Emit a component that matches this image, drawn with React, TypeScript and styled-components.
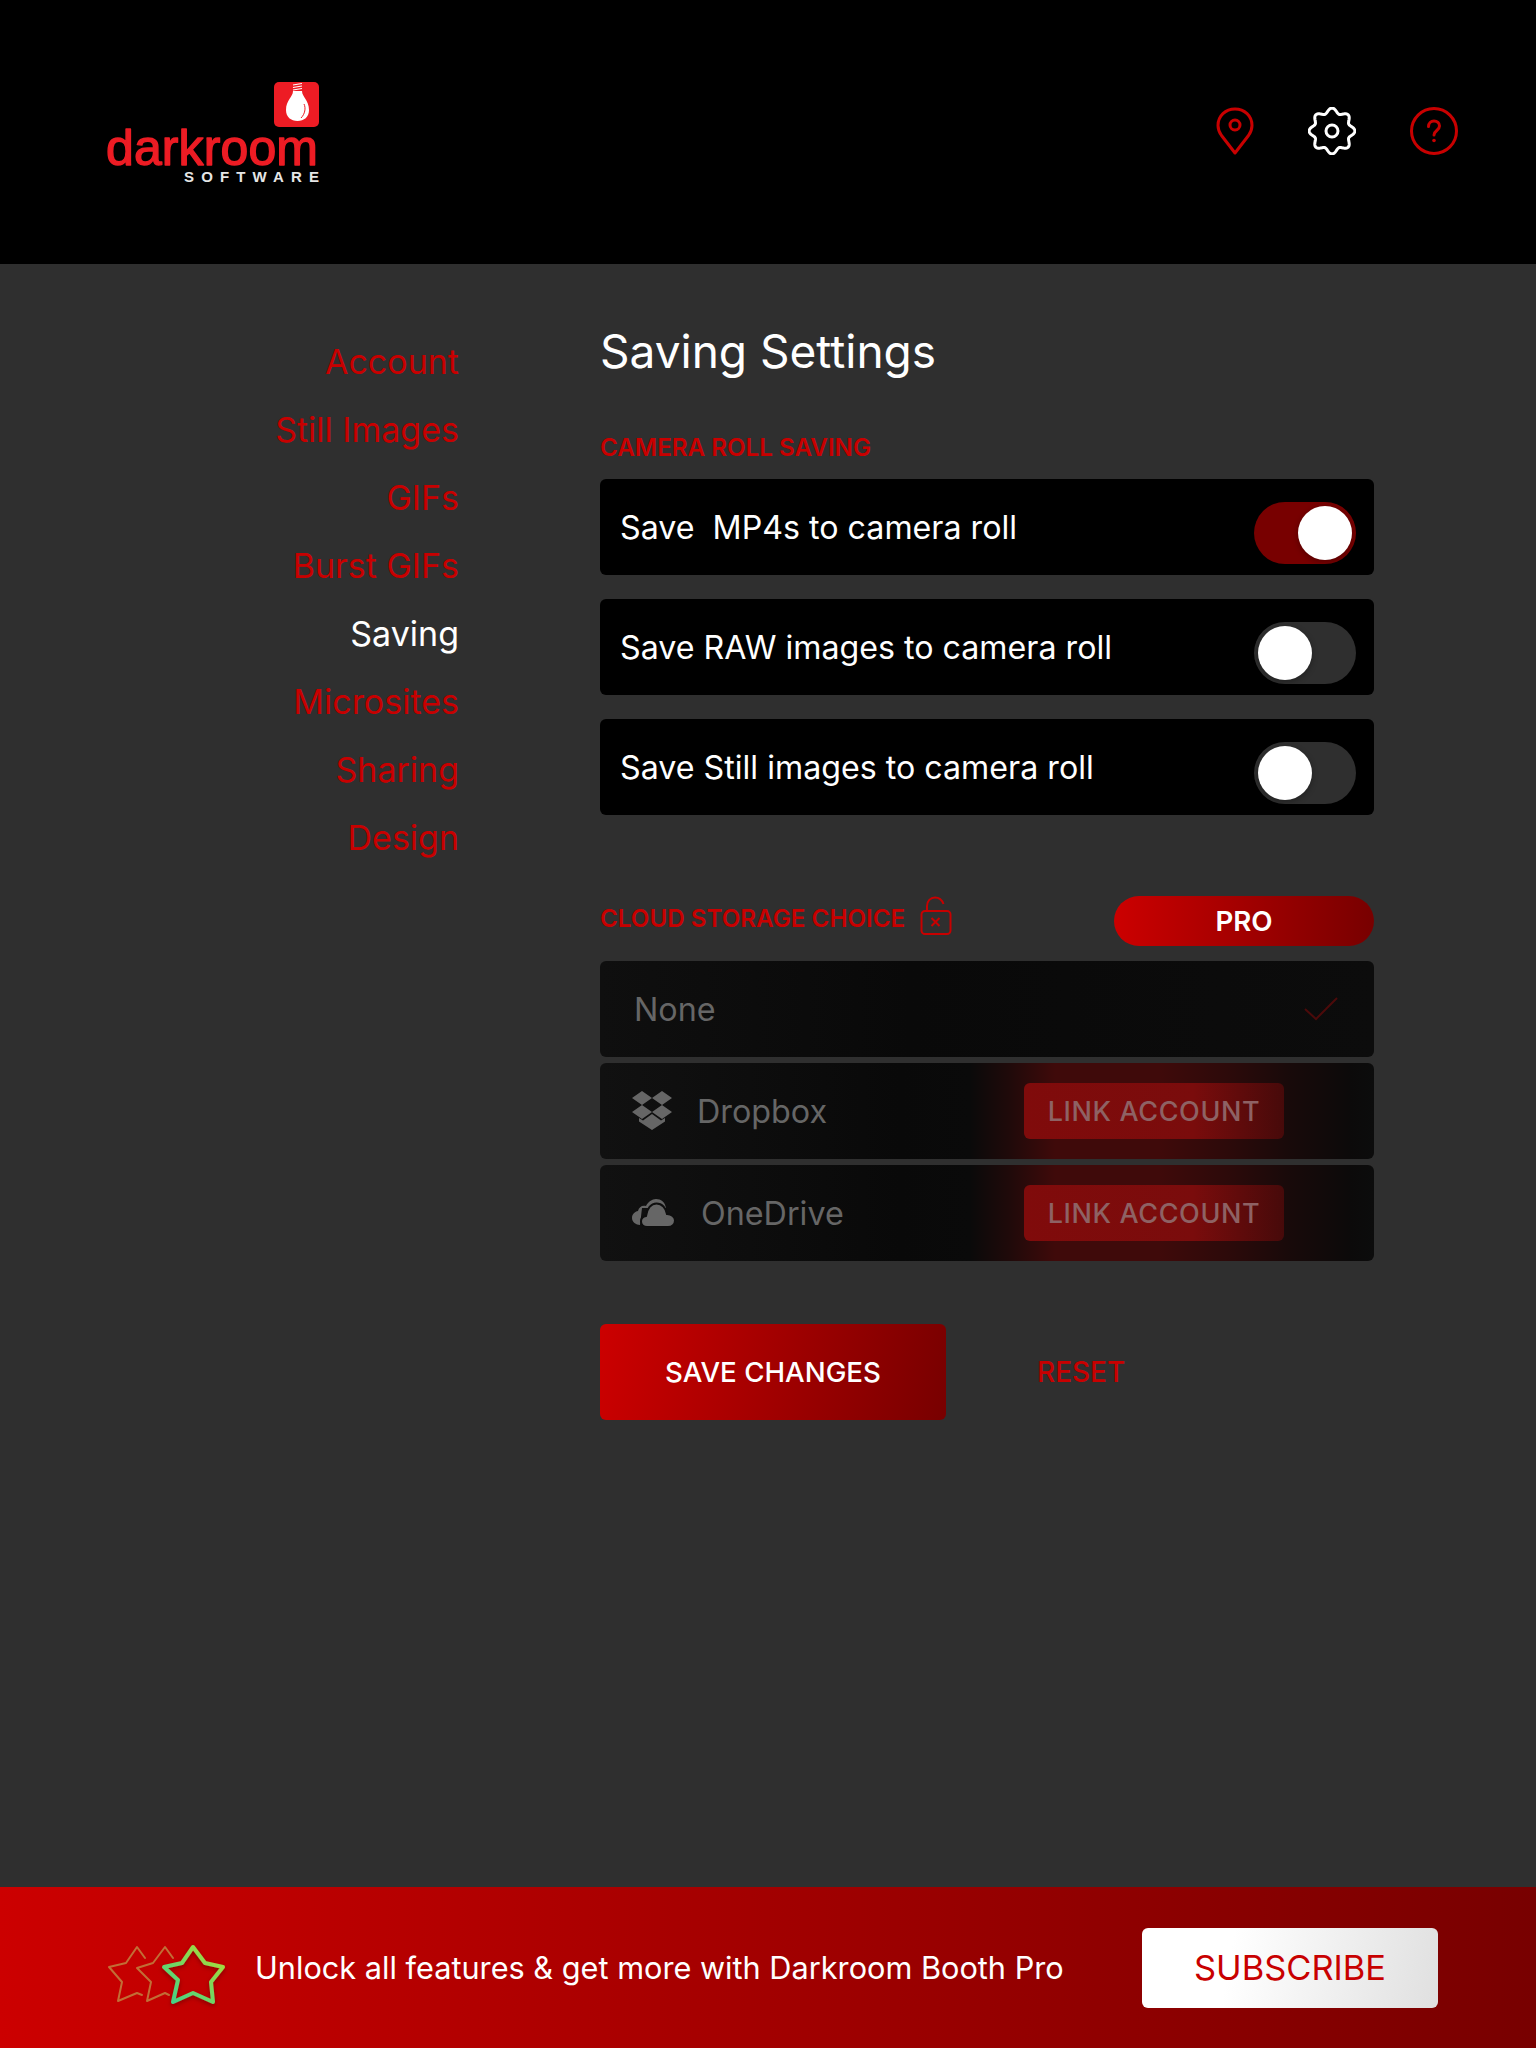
import React from "react";
import styled, { createGlobalStyle } from "styled-components";

const GlobalStyle = createGlobalStyle`
    html, body {
        margin: 0;
        padding: 0;
        background: #2f2f2f;
        font-family: Inter, "Noto Sans", sans-serif;
    }
    * {
        box-sizing: border-box;
    }
`

const Page = styled.div`
    width: 1536px;
    height: 2048px;
    display: flex;
    flex-direction: column;
    background: #2f2f2f;
    overflow: hidden;
`

const Header = styled.header`
    height: 264px;
    flex: none;
    background: #000;
    display: flex;
    align-items: flex-start;
    justify-content: space-between;
    padding: 82px 78px 0 105px;
`

const Logo = styled.svg`
    display: block;
    width: 215px;
    height: 102px;
`

const HeaderIcons = styled.nav`
    display: flex;
    align-items: flex-start;
    gap: 54px;
    padding-top: 25px;
`

const Main = styled.main`
    flex: 1;
    display: flex;
    align-items: flex-start;
`

const Sidebar = styled.ul`
    list-style: none;
    margin: 0;
    padding: 64px 0 0;
    width: 459px;
    flex: none;
    text-align: right;
`

const SideItem = styled.li<{ $active?: boolean }>`
    height: 68px;
    line-height: 68px;
    font-size: 34px;
    color: ${(p) => (p.$active ? "#fff" : "#c80000")};
`

const Content = styled.section`
    margin-left: 141px;
    width: 774px;
    padding-top: 59px;
`

const Title = styled.h1`
    margin: 0;
    font-size: 46px;
    line-height: 56px;
    font-weight: 400;
    color: #fff;
`

const SectionLabel = styled.h2`
    margin: 0;
    font-size: 24.2px;
    line-height: 28px;
    font-weight: 600;
    color: #c80000;
`

const FirstLabel = styled(SectionLabel)`
    margin-top: 55px;
    margin-bottom: 17px;
`

const CloudLabel = styled(SectionLabel)`
    margin-bottom: 5px;
`

const SwitchRows = styled.div`
    display: flex;
    flex-direction: column;
    gap: 24px;
`

const SwitchRow = styled.div`
    height: 96px;
    border-radius: 6px;
    background: #000;
    display: flex;
    align-items: center;
    justify-content: space-between;
    padding: 0 18px 0 20px;
    font-size: 32.2px;
    color: #fff;
    white-space: pre;
`

const Toggle = styled.span<{ $on?: boolean }>`
    width: 102px;
    height: 62px;
    margin-top: 12px;
    border-radius: 31px;
    padding: 4px;
    display: flex;
    justify-content: ${(p) => (p.$on ? "flex-end" : "flex-start")};
    background: ${(p) => (p.$on ? "#780000" : "#2f2f2f")};
`

const Knob = styled.span`
    width: 54px;
    height: 54px;
    border-radius: 50%;
    background: #fff;
    box-shadow: 0 2px 6px rgba(0, 0, 0, 0.3);
`

const CloudHeader = styled.div`
    margin-top: 81px;
    height: 50px;
    display: flex;
    align-items: center;
`

const LockIcon = styled.svg`
    display: block;
    margin-left: 15px;
    margin-bottom: 10px;
`

const ProPill = styled.span`
    margin-left: auto;
    width: 260px;
    height: 50px;
    border-radius: 25px;
    background: linear-gradient(90deg, #cc0000, #780000);
    color: #fff;
    font-size: 27.7px;
    font-weight: 600;
    display: flex;
    align-items: center;
    justify-content: center;
`

const CloudRows = styled.div`
    margin-top: 15px;
    display: flex;
    flex-direction: column;
    gap: 6px;
`

const CloudRow = styled.div<{ $link?: boolean }>`
    height: 96px;
    border-radius: 6px;
    display: flex;
    align-items: center;
    color: #666;
    font-size: 32.3px;
    background: ${(p) =>
        p.$link
            ? "linear-gradient(90deg, #111 0, #090909 300px, #0a0a0a 370px, #200a0a 410px, #3f0a0a 455px, #3f0a0a 560px, #2c0a0a 630px, #180a0a 690px, #0c0a0a 750px, #0c0c0c 100%)"
            : "linear-gradient(90deg, #0f0f0f, #090909 40%, #0c0c0c)"};
`

const NoneRow = styled(CloudRow)`
    padding: 0 36px 0 34px;
    justify-content: space-between;
`

const ServiceIcon = styled.svg`
    flex: none;
    display: block;
    margin-left: 32px;
`

const ServiceName = styled.span<{ $gap: number }>`
    margin-left: ${(p) => p.$gap}px;
`

const LinkButton = styled.span`
    margin-left: auto;
    margin-right: 90px;
    width: 260px;
    height: 56px;
    border-radius: 6px;
    background: linear-gradient(90deg, #800b0b, #7a0c0c 65%, #470a0a);
    color: #8e6264;
    font-size: 27px;
    font-weight: 500;
    letter-spacing: 0.6px;
    display: flex;
    align-items: center;
    justify-content: center;
`

const Actions = styled.div`
    margin-top: 63px;
    display: flex;
    align-items: center;
`

const SaveButton = styled.button`
    width: 346px;
    height: 96px;
    border: 0;
    border-radius: 6px;
    background: linear-gradient(100deg, #cc0000, #780000);
    color: #fff;
    font-family: inherit;
    font-size: 27.7px;
    font-weight: 500;
`

const ResetButton = styled.button`
    margin-left: 91px;
    border: 0;
    padding: 0;
    background: none;
    color: #c80000;
    font-family: inherit;
    font-size: 28px;
    font-weight: 500;
`

const Footer = styled.footer`
    height: 161px;
    flex: none;
    background: linear-gradient(90deg, #cc0000, #780000);
    display: flex;
    align-items: center;
    padding: 0 98px 0 100px;
`

const Stars = styled.svg`
    display: block;
    flex: none;
    margin-top: 15px;
`

const Promo = styled.span`
    margin-left: 25px;
    font-size: 30.7px;
    color: #fff;
`

const Subscribe = styled.button`
    margin-left: auto;
    width: 296px;
    height: 80px;
    border: 0;
    border-radius: 6px;
    background: linear-gradient(100deg, #fff 30%, #e0e0e0);
    color: #c80000;
    font-family: inherit;
    font-size: 34.4px;
    font-weight: 400;
`

const menu = ["Account", "Still Images", "GIFs", "Burst GIFs", "Saving", "Microsites", "Sharing", "Design"];

const saveRows = [
    { label: "Save  MP4s to camera roll", on: true },
    { label: "Save RAW images to camera roll", on: false },
    { label: "Save Still images to camera roll", on: false },
];

// eight soft lobes, same outline as the settings cog in the app
const cogPath = (() => {
    const pts: string[] = [];
    for (let i = 0; i < 240; i++) {
        const a = (i / 240) * Math.PI * 2;
        const r = 20.5 + 2.4 * Math.cos(8 * a);
        pts.push(`${(24 + r * Math.sin(a)).toFixed(2)} ${(24 - r * Math.cos(a)).toFixed(2)}`);
    }
    return `M${pts.join("L")}Z`;
})();

const App = (): JSX.Element => {
    return (
        <Page>
            <GlobalStyle />
            <Header>
                <Logo viewBox="0 0 215 102">
                    <rect x="169" y="0" width="45" height="45" rx="5" fill="#ed1c24" />
                    <path d="M188 3l9-1.500M188 5.500l9-1.500M188 8l9-1.500" stroke="#fff" strokeWidth="1.2" />
                    <path d="M188 9h9c0 6 7 9 7 19 0 7-5 11-11.500 11S181 35 181 28c0-10 7-13 7-19z" fill="#fff" />
                    <path d="M199 22c2 4 1 10-3 14" stroke="#ed1c24" strokeWidth="1" fill="none" />
                    <text
                        x="1"
                        y="83"
                        fontFamily="'Liberation Sans', sans-serif"
                        fontSize="50"
                        fill="#ed1c24"
                        stroke="#ed1c24"
                        strokeWidth="1.4"
                        strokeLinejoin="round"
                        textLength="212"
                    >
                        darkroom
                    </text>
                    <text
                        x="79"
                        y="100"
                        fontFamily="'Liberation Sans', sans-serif"
                        fontWeight="700"
                        fontSize="15"
                        fill="#e6e6e6"
                        textLength="135"
                    >
                        SOFTWARE
                    </text>
                </Logo>
                <HeaderIcons>
                    <svg width="38" height="48" viewBox="0 0 38 48" fill="none" stroke="#c80000" strokeWidth="3">
                        <path d="M19 46L5.500 28.500C3 25 2 22 2 18.500 2 9 9.500 2 19 2s17 7 17 16.500c0 3.500-1 6.500-3.500 10z" strokeLinejoin="round" />
                        <circle cx="19" cy="18" r="5" />
                    </svg>
                    <svg width="48" height="48" viewBox="0 0 48 48" fill="none" stroke="#fff" strokeWidth="3">
                        <path d={cogPath} />
                        <circle cx="24" cy="24" r="6" />
                    </svg>
                    <svg width="48" height="48" viewBox="0 0 48 48" fill="none" stroke="#c80000" strokeWidth="3">
                        <circle cx="24" cy="24" r="22.500" />
                        <path d="M18.500 19.500c0-3.200 2.400-5.500 5.500-5.500s5.500 2 5.500 5c0 4.500-5.500 4.500-5.500 9" strokeLinecap="round" />
                        <circle cx="24" cy="33.500" r="1.800" fill="#c80000" stroke="none" />
                    </svg>
                </HeaderIcons>
            </Header>
            <Main>
                <Sidebar>
                    {menu.map((item) => (
                        <SideItem key={item} $active={item === "Saving"}>{item}</SideItem>
                    ))}
                </Sidebar>
                <Content>
                    <Title>Saving Settings</Title>
                    <FirstLabel>CAMERA ROLL SAVING</FirstLabel>
                    <SwitchRows>
                        {saveRows.map((row) => (
                            <SwitchRow key={row.label}>
                                {row.label}
                                <Toggle $on={row.on}><Knob /></Toggle>
                            </SwitchRow>
                        ))}
                    </SwitchRows>
                    <CloudHeader>
                        <CloudLabel>CLOUD STORAGE CHOICE</CloudLabel>
                        <LockIcon width="32" height="40" viewBox="0 0 32 40" fill="none" stroke="#c80000" strokeWidth="2">
                            <rect x="1.500" y="15" width="29" height="23" rx="3.500" />
                            <path d="M7 15V10c0-5 3.500-8.500 8-8.500 4 0 7 2.500 8.500 6.500" />
                            <path d="M11.500 22l8 8M19.500 22l-8 8" />
                        </LockIcon>
                        <ProPill>PRO</ProPill>
                    </CloudHeader>
                    <CloudRows>
                        <NoneRow>
                            None
                            <svg width="34" height="24" viewBox="0 0 34 24" fill="none" stroke="#4c0a0a" strokeWidth="2">
                                <path d="M1 12l11 10L33 1" />
                            </svg>
                        </NoneRow>
                        <CloudRow $link>
                            <ServiceIcon width="40" height="40" viewBox="0 0 40 40" fill="#666">
                                <path d="M10 0l10 7-10 7L0 7zM30 0l10 7-10 7-10-7zM10 14l10 7-10 7-10-7zM30 14l10 7-10 7-10-7z" />
                                <path d="M20 23l9 6.500 4-2.500v3.500L20 39 7 30.500V27l4 2.500z" />
                            </ServiceIcon>
                            <ServiceName $gap={25}>Dropbox</ServiceName>
                            <LinkButton>LINK ACCOUNT</LinkButton>
                        </CloudRow>
                        <CloudRow $link>
                            <ServiceIcon width="44" height="28" viewBox="0 0 44 28" fill="#666">
                                <path d="M8 26c-4 0-8-3-8-7s3-6.500 6-7c1-4 4-6 8-5 2-4 6-7 10-7 5 0 9 3 10 9H10z" />
                                <path
                                    d="M15 28c-3.500 0-6-2.500-6-5.500s2-5 5-5.500c1-7.500 5-12.500 10.500-12.500S34 9 35 15c4.500 0 8 2.800 8 6.500S40 28 36 28z"
                                    stroke="#0e0e0e"
                                    strokeWidth="2"
                                />
                            </ServiceIcon>
                            <ServiceName $gap={25}>OneDrive</ServiceName>
                            <LinkButton>LINK ACCOUNT</LinkButton>
                        </CloudRow>
                    </CloudRows>
                    <Actions>
                        <SaveButton>SAVE CHANGES</SaveButton>
                        <ResetButton>RESET</ResetButton>
                    </Actions>
                </Content>
            </Main>
            <Footer>
                <Stars width="130" height="70" viewBox="0 0 130 70" fill="none" strokeLinecap="round" strokeLinejoin="round">
                    <defs>
                        <linearGradient id="starGreen" x1="1" y1="0" x2="0" y2="1">
                            <stop offset="0" stopColor="#b4dc32" />
                            <stop offset="1" stopColor="#3cd28c" />
                        </linearGradient>
                        <filter id="starShadow" x="-20%" y="-20%" width="140%" height="140%">
                            <feDropShadow dx="0" dy="2" stdDeviation="2" floodColor="#000" floodOpacity="0.3" />
                        </filter>
                    </defs>
                    <path
                        d="M45 18 L37 7 L26 23 L9 27 L22 42 L18 61 L37 53 L42 55"
                        stroke="#c08a44"
                        strokeOpacity="0.8"
                        strokeWidth="2"
                    />
                    <path
                        d="M73 18 L65 7 L53 23 L37 28 L51 42 L47 61 L65 53 L69 55"
                        stroke="#c08a44"
                        strokeOpacity="0.8"
                        strokeWidth="2"
                    />
                    <path
                        d="M93 7 L105 23 L123 27 L111 42 L113 62 L93 53 L73 62 L78 40 L64 27 L82 23 Z"
                        stroke="url(#starGreen)"
                        strokeWidth="4"
                        filter="url(#starShadow)"
                    />
                </Stars>
                <Promo>Unlock all features &amp; get more with Darkroom Booth Pro</Promo>
                <Subscribe>SUBSCRIBE</Subscribe>
            </Footer>
        </Page>
    );
};

export default App;
